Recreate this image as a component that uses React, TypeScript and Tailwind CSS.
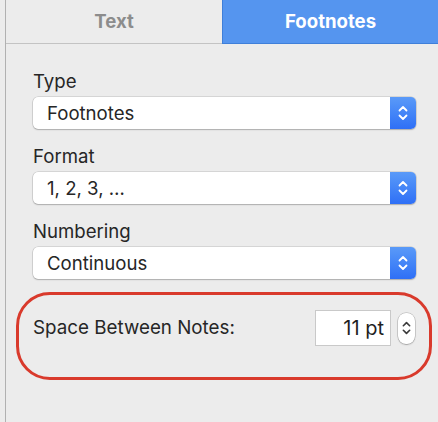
import React from "react";

const font = { fontFamily: "Inter, 'Noto Sans', sans-serif" };

function Chevrons({ color, w = 10 }: { color: string; w?: number }) {
  return (
    <svg width={w} height="16" viewBox="0 0 10 16" fill="none">
      <path d="M1.5 5.5 L5 2 L8.5 5.5" stroke={color} strokeWidth="1.8" strokeLinecap="round" strokeLinejoin="round" />
      <path d="M1.5 10.5 L5 14 L8.5 10.5" stroke={color} strokeWidth="1.8" strokeLinecap="round" strokeLinejoin="round" />
    </svg>
  );
}

function Select({ value }: { value: string }) {
  return (
    <div className="flex h-[32px] rounded-[5px] bg-white shadow-[0_0_0_0.5px_rgba(0,0,0,0.18),0_1px_1.5px_rgba(0,0,0,0.2)]">
      <div className="flex-1 pl-[14px] flex items-center text-[18.6px] text-[#262626] leading-none">{value}</div>
      <div className="w-[26px] rounded-r-[5px] bg-gradient-to-b from-[#5a9af8] to-[#2f6ff6] flex items-center justify-center">
        <Chevrons color="#ffffff" />
      </div>
    </div>
  );
}

function Field({ label, value }: { label: string; value: string }) {
  return (
    <div className="flex flex-col">
      <div className="text-[18.6px] leading-[22px] text-[#262626] h-[22px]">{label}</div>
      <div className="mt-[5px]">
        <Select value={value} />
      </div>
    </div>
  );
}

export default function App() {
  return (
    <div className="w-[438px] h-[422px] bg-[#ececec] flex pl-[5px] overflow-hidden" style={font}>
      <div className="flex-1 flex flex-col border-l border-[#b1b1b1]">
        <div className="h-[44px] flex border-b border-[#c3c3c3]">
          <div className="w-[216px] flex items-center justify-center text-[18.6px] font-bold text-[#8c8c8c]">Text</div>
          <div className="flex-1 -mb-px flex items-center justify-center text-[18.6px] font-bold text-white bg-[#5595ef] border-l border-b border-[#3f7fd9]">
            Footnotes
          </div>
        </div>
        <div className="flex flex-col pl-[27px] pr-[22px] pt-[26px]">
          <div className="flex flex-col gap-[16px]">
            <Field label="Type" value="Footnotes" />
            <Field label="Format" value="1, 2, 3, …" />
            <Field label="Numbering" value="Continuous" />
          </div>
          <div className="mt-[13px] -ml-[17px] -mr-[16px] h-[88px] rounded-[34px] border-[3px] border-[#d93a2c] pl-[14px] pr-[14px] pt-[15px]">
            <div className="flex items-center">
              <div className="flex-1 text-[18.8px] text-[#262626]">Space Between Notes:</div>
              <div className="w-[76px] h-[36px] bg-white border border-[#c9c9c9] flex items-center justify-end pr-[6px] text-[20px] text-[#1f1f1f]">
                11 pt
              </div>
              <div className="ml-[7px] w-[17px] h-[31px] rounded-[8px] bg-white shadow-[0_0_0_0.5px_rgba(0,0,0,0.25),0_1px_1.5px_rgba(0,0,0,0.2)] flex items-center justify-center">
                <Chevrons color="#3a3a3a" w={9} />
              </div>
            </div>
          </div>
        </div>
      </div>
    </div>
  );
}
